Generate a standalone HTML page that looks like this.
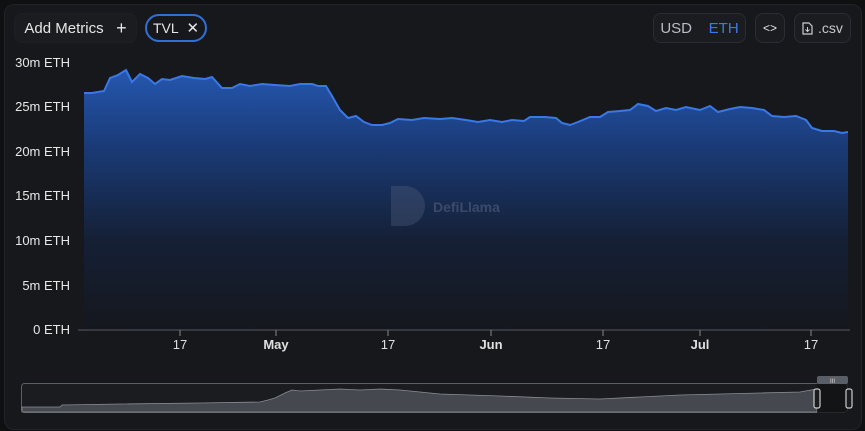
<!DOCTYPE html>
<html><head><meta charset="utf-8"><style>
html,body{margin:0;padding:0;background:#0f1012;}
body{width:865px;height:431px;overflow:hidden;font-family:"Liberation Sans",sans-serif;position:relative;}
.card{position:absolute;left:4px;top:4px;width:856px;height:424px;background:#16181c;border-radius:10px;border:1px solid #202328;}
.btn{position:absolute;border:1px solid #2a2d33;border-radius:8px;background:#1a1c20;color:#e6e6e6;box-sizing:border-box;display:flex;align-items:center;justify-content:center;}
</style></head><body>
<div class="card"></div>
<div class="btn" style="left:14px;top:13px;width:123px;height:30px;font-size:15px;border-color:#1c1f23;">Add Metrics&nbsp;&nbsp;&nbsp;<span style="font-size:18px">+</span></div>
<div class="btn" style="left:145px;top:14px;width:62px;height:28px;border:2px solid #2f6fd6;border-radius:15px;background:#16181c;font-size:14px;">TVL&nbsp;&nbsp;<span style="font-size:15px">✕</span></div>
<div class="btn" style="left:653px;top:13px;width:93px;height:30px;font-size:15px;"><span style="color:#b8bcc4">USD</span>&nbsp;&nbsp;&nbsp;&nbsp;<span style="color:#3a7ae8">ETH</span></div>
<div class="btn" style="left:755px;top:13px;width:30px;height:30px;font-size:12px;">&lt;&gt;</div>
<div class="btn" style="left:794px;top:13px;width:57px;height:30px;font-size:14px;color:#c8c8c8;"><svg width="11" height="13" viewBox="0 0 11 13" style="margin-right:5px"><path d="M1 1h6l3 3v8H1z" fill="none" stroke="#ccc" stroke-width="1.2"/><path d="M5.5 5v4M3.5 7.5l2 2 2-2" fill="none" stroke="#ccc" stroke-width="1"/></svg>.csv</div>

<svg width="865" height="431" style="position:absolute;left:0;top:0">
<defs>
<linearGradient id="g" x1="0" y1="0" x2="0" y2="1">
<stop offset="0" stop-color="#2557b0"/>
<stop offset="0.3" stop-color="#1a3a76"/>
<stop offset="0.65" stop-color="#152036"/>
<stop offset="1" stop-color="#15171d"/>
</linearGradient>
</defs>
<g font-size="13" fill="#e8e8e8" text-anchor="end">
<text x="70" y="67">30m ETH</text><text x="70" y="111">25m ETH</text><text x="70" y="156">20m ETH</text>
<text x="70" y="200">15m ETH</text><text x="70" y="245">10m ETH</text><text x="70" y="290">5m ETH</text><text x="70" y="334">0 ETH</text>
</g>
<path d="M84,93 L92,93 104,91 110,78 118,75 126,70 132,82 140,74 148,78 155,84 162,79 170,80 182,76 194,78 205,79 212,77 222,88 232,88 240,84 250,86 262,84 275,85 290,86 300,84 312,84 318,86 326,86 332,96 340,110 348,118 356,116 364,122 372,125 382,125 390,123 398,119 412,120 424,118 440,119 452,118 466,120 478,122 490,120 502,122 512,120 524,121 530,117 545,117 556,118 562,123 570,125 578,122 590,117 600,117 608,112 620,111 630,110 638,104 648,106 656,111 666,108 676,110 686,107 700,110 710,106 718,112 730,109 740,107 752,108 764,110 772,116 784,117 796,116 806,120 812,128 822,131 834,131 842,133 848,132 L848,330 L84,330 Z" fill="url(#g)"/>
<path d="M84,93 L92,93 104,91 110,78 118,75 126,70 132,82 140,74 148,78 155,84 162,79 170,80 182,76 194,78 205,79 212,77 222,88 232,88 240,84 250,86 262,84 275,85 290,86 300,84 312,84 318,86 326,86 332,96 340,110 348,118 356,116 364,122 372,125 382,125 390,123 398,119 412,120 424,118 440,119 452,118 466,120 478,122 490,120 502,122 512,120 524,121 530,117 545,117 556,118 562,123 570,125 578,122 590,117 600,117 608,112 620,111 630,110 638,104 648,106 656,111 666,108 676,110 686,107 700,110 710,106 718,112 730,109 740,107 752,108 764,110 772,116 784,117 796,116 806,120 812,128 822,131 834,131 842,133 848,132" fill="none" stroke="#3a78e6" stroke-width="2"/>
<g opacity="0.3">
<path d="M391,186 h14 a20,20 0 0 1 0,40 h-14z" fill="#5d6b86"/>
<text x="433" y="212" font-size="14" font-weight="bold" fill="#8a97b0" font-family="Liberation Sans">DefiLlama</text>
</g>
<line x1="78" y1="330" x2="850" y2="330" stroke="#555a62" stroke-width="1"/>
<g stroke="#888" stroke-width="1">
<line x1="180" y1="330" x2="180" y2="336"/><line x1="276" y1="330" x2="276" y2="336"/><line x1="388" y1="330" x2="388" y2="336"/>
<line x1="491" y1="330" x2="491" y2="336"/><line x1="603" y1="330" x2="603" y2="336"/><line x1="700" y1="330" x2="700" y2="336"/><line x1="811" y1="330" x2="811" y2="336"/>
</g>
<g font-size="13" fill="#e0e0e0" text-anchor="middle">
<text x="180" y="349">17</text><text x="276" y="349" font-weight="bold">May</text><text x="388" y="349">17</text>
<text x="491" y="349" font-weight="bold">Jun</text><text x="603" y="349">17</text><text x="700" y="349" font-weight="bold">Jul</text><text x="811" y="349">17</text>
</g>
<rect x="21.5" y="383.5" width="826" height="29" rx="3" fill="#1a1c20" stroke="#5a5e66"/>
<path d="M22,407 L60,407 62,405 120,404 200,403 260,402 268,400 275,398 285,393 292,390 300,391 320,390 340,389 360,390 380,389 400,390 420,392 440,394 470,395 500,396 550,398 600,399 640,397 680,395 720,394 760,393 800,392 817,389 L817,412 L22,412 Z" fill="#45484e" stroke="#8a8d93" stroke-width="0.8"/>
<rect x="817" y="383" width="31" height="30" fill="#101113" opacity="0.7"/>
<rect x="817" y="376" width="31" height="8" rx="2" fill="#5a5e66"/>
<text x="832.5" y="383" font-size="6" fill="#ddd" text-anchor="middle">III</text>
<rect x="814" y="389" width="6" height="19" rx="2" fill="#1a1c20" stroke="#ccc" stroke-width="1.2"/>
<rect x="846" y="389" width="6" height="19" rx="2" fill="#1a1c20" stroke="#ccc" stroke-width="1.2"/>
</svg>
</body></html>
